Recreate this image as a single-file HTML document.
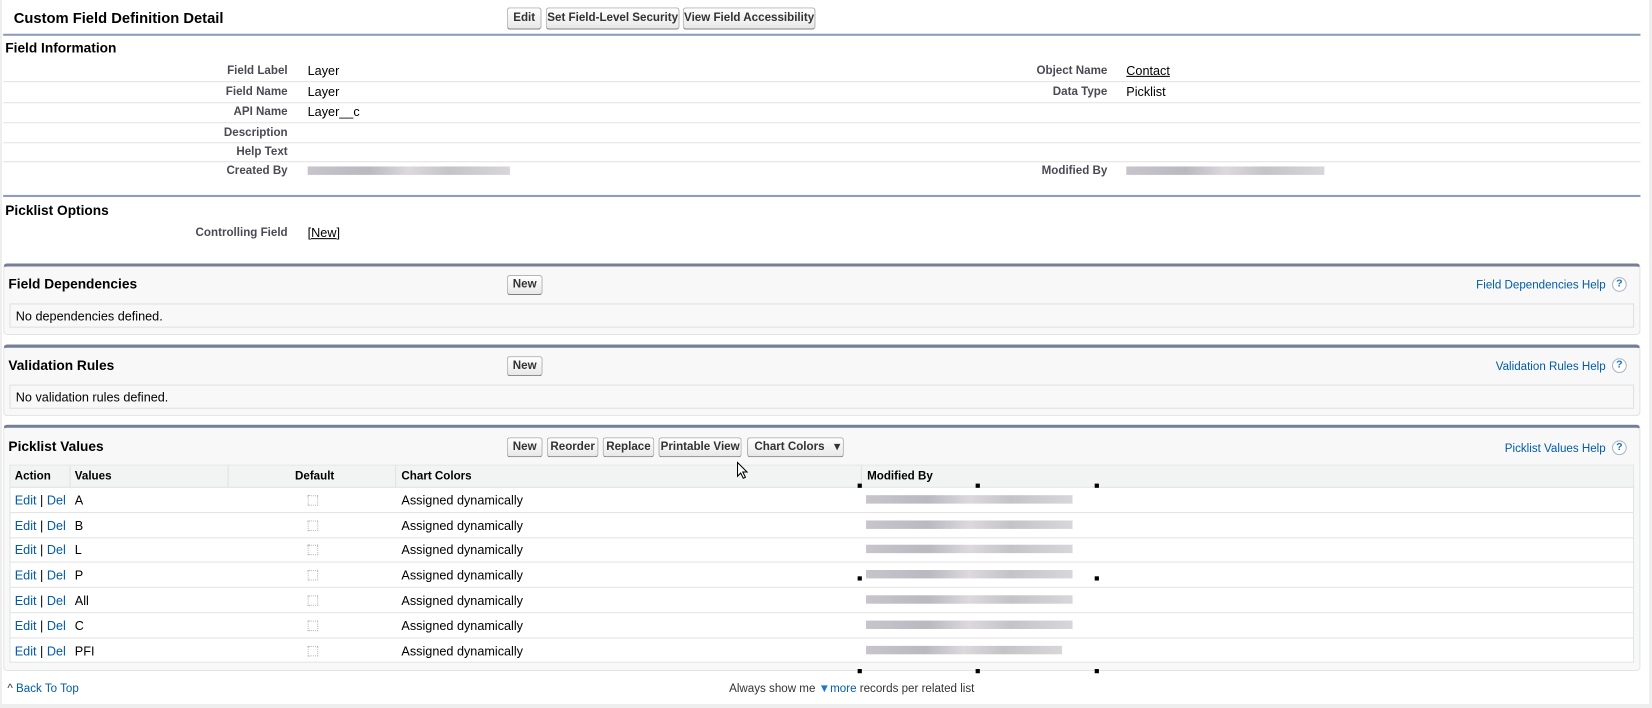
<!DOCTYPE html>
<html><head><meta charset="utf-8"><style>
*{margin:0;padding:0;box-sizing:border-box}
body{width:1652px;height:708px;background:#fff;font-family:"Liberation Sans",Arial,sans-serif;font-size:12px;color:#000;position:relative;overflow:hidden}
#w{position:absolute;left:0;top:0;width:1568px;height:672px;transform:scale(1.0536);transform-origin:0 0}
.a{position:absolute;white-space:nowrap}
.b{position:absolute;height:19px;border:1px solid #b5b5b5;border-bottom-color:#7f7f7f;border-radius:3px;background:linear-gradient(#fff,#e8e8e8);font-weight:bold;font-size:11px;color:#333;text-align:center;line-height:17px}
.lbl{position:absolute;font-weight:bold;font-size:11px;color:#4a4a56;text-align:right;width:200px}
.val{position:absolute;font-size:12px;color:#000}
.sep{position:absolute;height:1px;background:#e3e3e3}
.panel{position:absolute;left:3px;width:1554px;background:#f8f8f8;border:1px solid #e0e3e5;border-top:3px solid #747e96;border-radius:4px}
.ptitle{position:absolute;font-weight:bold;font-size:13px;color:#000}
.help{position:absolute;right:32px;color:#015ba7;font-size:11px}
.q{position:absolute;right:12px;width:14px;height:14px;border-radius:50%;border:1px solid #a9b7c6;background:#fff;color:#1f6fbf;font-weight:bold;font-size:10px;text-align:center;line-height:12px}
.blur{position:absolute;height:8px;background:linear-gradient(90deg,#c8c4cc,#b9b9c0 30%,#dcd8de 50%,#c4c4c8 70%,#d8d6da)}
.lnk{color:#015ba7}
.cb{position:absolute;width:10px;height:10px;border:1px dotted #bbb}
</style></head><body>
<div class="a" style="left:0;top:0;width:2px;height:708px;background:#eee"></div>
<div class="a" style="left:0;top:704px;width:1652px;height:4px;background:#eee"></div>
<div class="a" style="left:1649px;top:0;width:3px;height:708px;background:#eee"></div>
<div id="w">
<div class="a" style="left:13px;top:9px;font-weight:bold;font-size:14px">Custom Field Definition Detail</div>
<div class="b" style="left:481px;top:7px;width:33px;height:21px;line-height:19px">Edit</div>
<div class="b" style="left:518px;top:7px;width:127px;height:21px;line-height:19px">Set Field-Level Security</div>
<div class="b" style="left:648px;top:7px;width:126px;height:21px;line-height:19px">View Field Accessibility</div>
<div class="a" style="left:3px;top:32px;width:1554px;height:2px;background:#8e9dbe"></div>
<div class="a" style="left:5px;top:38px;font-weight:bold;font-size:13px">Field Information</div>

<div class="lbl" style="left:73px;top:61px">Field Label</div><div class="val" style="left:292px;top:60px">Layer</div>
<div class="lbl" style="left:851px;top:61px">Object Name</div><div class="val" style="left:1069px;top:60px;text-decoration:underline">Contact</div>
<div class="sep" style="left:3px;top:77px;width:1554px"></div>
<div class="lbl" style="left:73px;top:81px">Field Name</div><div class="val" style="left:292px;top:80px">Layer</div>
<div class="lbl" style="left:851px;top:81px">Data Type</div><div class="val" style="left:1069px;top:80px">Picklist</div>
<div class="sep" style="left:3px;top:97px;width:1554px"></div>
<div class="lbl" style="left:73px;top:100px">API Name</div><div class="val" style="left:292px;top:99px">Layer__c</div>
<div class="sep" style="left:3px;top:116px;width:1554px"></div>
<div class="lbl" style="left:73px;top:120px">Description</div>
<div class="sep" style="left:3px;top:135px;width:1554px"></div>
<div class="lbl" style="left:73px;top:138px">Help Text</div>
<div class="sep" style="left:3px;top:153px;width:1554px"></div>
<div class="lbl" style="left:73px;top:156px">Created By</div>
<div class="blur" style="left:292px;top:158px;width:192px"></div>
<div class="lbl" style="left:851px;top:156px">Modified By</div>
<div class="blur" style="left:1069px;top:158px;width:188px"></div>

<div class="a" style="left:3px;top:185px;width:1554px;height:2px;background:#8e9dbe"></div>
<div class="a" style="left:5px;top:192px;font-weight:bold;font-size:13px">Picklist Options</div>
<div class="lbl" style="left:73px;top:215px">Controlling Field</div>
<div class="val" style="left:292px;top:214px;text-decoration:underline">[New]</div>

<div class="panel" style="top:250px;height:68px">
 <div class="ptitle" style="left:4px;top:9px">Field Dependencies</div>
 <div class="b" style="left:477px;top:8px;width:34px">New</div>
 <div class="help" style="top:12px">Field Dependencies Help</div><div class="q" style="top:10px">?</div>
 <div class="a" style="left:5px;top:35px;width:1542px;height:23px;border:1px solid #e0e0e0;padding:4px 5px">No dependencies defined.</div>
</div>
<div class="panel" style="top:327px;height:68px">
 <div class="ptitle" style="left:4px;top:9px">Validation Rules</div>
 <div class="b" style="left:477px;top:8px;width:34px">New</div>
 <div class="help" style="top:12px">Validation Rules Help</div><div class="q" style="top:10px">?</div>
 <div class="a" style="left:5px;top:35px;width:1542px;height:23px;border:1px solid #e0e0e0;padding:4px 5px">No validation rules defined.</div>
</div>
<div class="panel" style="top:403px;height:234px">
 <div class="ptitle" style="left:4px;top:10px">Picklist Values</div>
 <div class="b" style="left:477px;top:9px;width:34px">New</div>
 <div class="b" style="left:515px;top:9px;width:49px">Reorder</div>
 <div class="b" style="left:568px;top:9px;width:49px">Replace</div>
 <div class="b" style="left:621px;top:9px;width:79px">Printable View</div>
 <div class="b" style="left:705px;top:9px;width:92px;text-align:left;padding-left:6px">Chart Colors &nbsp;&nbsp;▾</div>
 <div class="help" style="top:14px">Picklist Values Help</div><div class="q" style="top:12px">?</div>
</div>
<div class="a" style="left:9px;top:441px;width:1542px;height:188px;background:#fff;border:1px solid #e0e3e5"></div>
<div class="a" style="left:10px;top:442px;width:1540px;height:21px;background:#f2f3f3;border-bottom:1px solid #e0e3e5"></div>
<div class="a" style="left:66px;top:442px;width:1px;height:21px;background:#e0e3e5"></div>
<div class="a" style="left:216px;top:442px;width:1px;height:21px;background:#e0e3e5"></div>
<div class="a" style="left:375px;top:442px;width:1px;height:21px;background:#e0e3e5"></div>
<div class="a" style="left:817px;top:442px;width:1px;height:21px;background:#e0e3e5"></div>
<div class="a" style="left:14px;top:446px;font-weight:bold;font-size:11px">Action</div>
<div class="a" style="left:71px;top:446px;font-weight:bold;font-size:11px">Values</div>
<div class="a" style="left:280px;top:446px;font-weight:bold;font-size:11px">Default</div>
<div class="a" style="left:381px;top:446px;font-weight:bold;font-size:11px">Chart Colors</div>
<div class="a" style="left:823px;top:446px;font-weight:bold;font-size:11px">Modified By</div>
<div class="a" style="left:817px;top:463px;width:224px;height:163px;background:#fff"></div>

<div class="a" style="left:10px;top:486px;width:1540px;height:1px;background:#e3e3e3"></div>
<div class="a" style="left:10px;top:510px;width:1540px;height:1px;background:#e3e3e3"></div>
<div class="a" style="left:10px;top:533px;width:1540px;height:1px;background:#e3e3e3"></div>
<div class="a" style="left:10px;top:557px;width:1540px;height:1px;background:#e3e3e3"></div>
<div class="a" style="left:10px;top:581px;width:1540px;height:1px;background:#e3e3e3"></div>
<div class="a" style="left:10px;top:605px;width:1540px;height:1px;background:#e3e3e3"></div>

<div class="a" style="left:14px;top:468px"><span class="lnk">Edit</span> | <span class="lnk">Del</span></div><div class="a" style="left:71px;top:468px">A</div><div class="cb" style="left:292px;top:470px"></div><div class="a" style="left:381px;top:468px">Assigned dynamically</div>
<div class="a" style="left:14px;top:492px"><span class="lnk">Edit</span> | <span class="lnk">Del</span></div><div class="a" style="left:71px;top:492px">B</div><div class="cb" style="left:292px;top:494px"></div><div class="a" style="left:381px;top:492px">Assigned dynamically</div>
<div class="a" style="left:14px;top:515px"><span class="lnk">Edit</span> | <span class="lnk">Del</span></div><div class="a" style="left:71px;top:515px">L</div><div class="cb" style="left:292px;top:517px"></div><div class="a" style="left:381px;top:515px">Assigned dynamically</div>
<div class="a" style="left:14px;top:539px"><span class="lnk">Edit</span> | <span class="lnk">Del</span></div><div class="a" style="left:71px;top:539px">P</div><div class="cb" style="left:292px;top:541px"></div><div class="a" style="left:381px;top:539px">Assigned dynamically</div>
<div class="a" style="left:14px;top:563px"><span class="lnk">Edit</span> | <span class="lnk">Del</span></div><div class="a" style="left:71px;top:563px">All</div><div class="cb" style="left:292px;top:565px"></div><div class="a" style="left:381px;top:563px">Assigned dynamically</div>
<div class="a" style="left:14px;top:587px"><span class="lnk">Edit</span> | <span class="lnk">Del</span></div><div class="a" style="left:71px;top:587px">C</div><div class="cb" style="left:292px;top:589px"></div><div class="a" style="left:381px;top:587px">Assigned dynamically</div>
<div class="a" style="left:14px;top:611px"><span class="lnk">Edit</span> | <span class="lnk">Del</span></div><div class="a" style="left:71px;top:611px">PFI</div><div class="cb" style="left:292px;top:613px"></div><div class="a" style="left:381px;top:611px">Assigned dynamically</div>

<div class="blur" style="left:822px;top:470px;width:196px"></div>
<div class="blur" style="left:822px;top:494px;width:196px"></div>
<div class="blur" style="left:822px;top:517px;width:196px"></div>
<div class="blur" style="left:822px;top:541px;width:196px"></div>
<div class="blur" style="left:822px;top:565px;width:196px"></div>
<div class="blur" style="left:822px;top:589px;width:196px"></div>
<div class="blur" style="left:822px;top:613px;width:186px"></div>

<div class="a" style="left:814px;top:459px;width:4px;height:4px;background:#000"></div>
<div class="a" style="left:926px;top:459px;width:4px;height:4px;background:#000"></div>
<div class="a" style="left:1039px;top:459px;width:4px;height:4px;background:#000"></div>
<div class="a" style="left:814px;top:547px;width:4px;height:4px;background:#000"></div>
<div class="a" style="left:1039px;top:547px;width:4px;height:4px;background:#000"></div>
<div class="a" style="left:814px;top:635px;width:4px;height:4px;background:#000"></div>
<div class="a" style="left:926px;top:635px;width:4px;height:4px;background:#000"></div>
<div class="a" style="left:1039px;top:635px;width:4px;height:4px;background:#000"></div>

<svg class="a" style="left:699px;top:438px" width="12" height="18" viewBox="0 0 12 18"><path d="M1 1 L1 14 L4 11 L6.5 16 L8.5 15 L6 10 L10 10 Z" fill="#fff" stroke="#000" stroke-width="1"/></svg>

<div class="a" style="left:7px;top:648px;font-size:11px"><span style="color:#333">^</span> <span class="lnk">Back To Top</span></div>
<div class="a" style="left:692px;top:648px;font-size:11px;color:#333">Always show me <span style="color:#1f78c8">▼</span><span class="lnk">more</span> records per related list</div>
</div>
</body></html>
